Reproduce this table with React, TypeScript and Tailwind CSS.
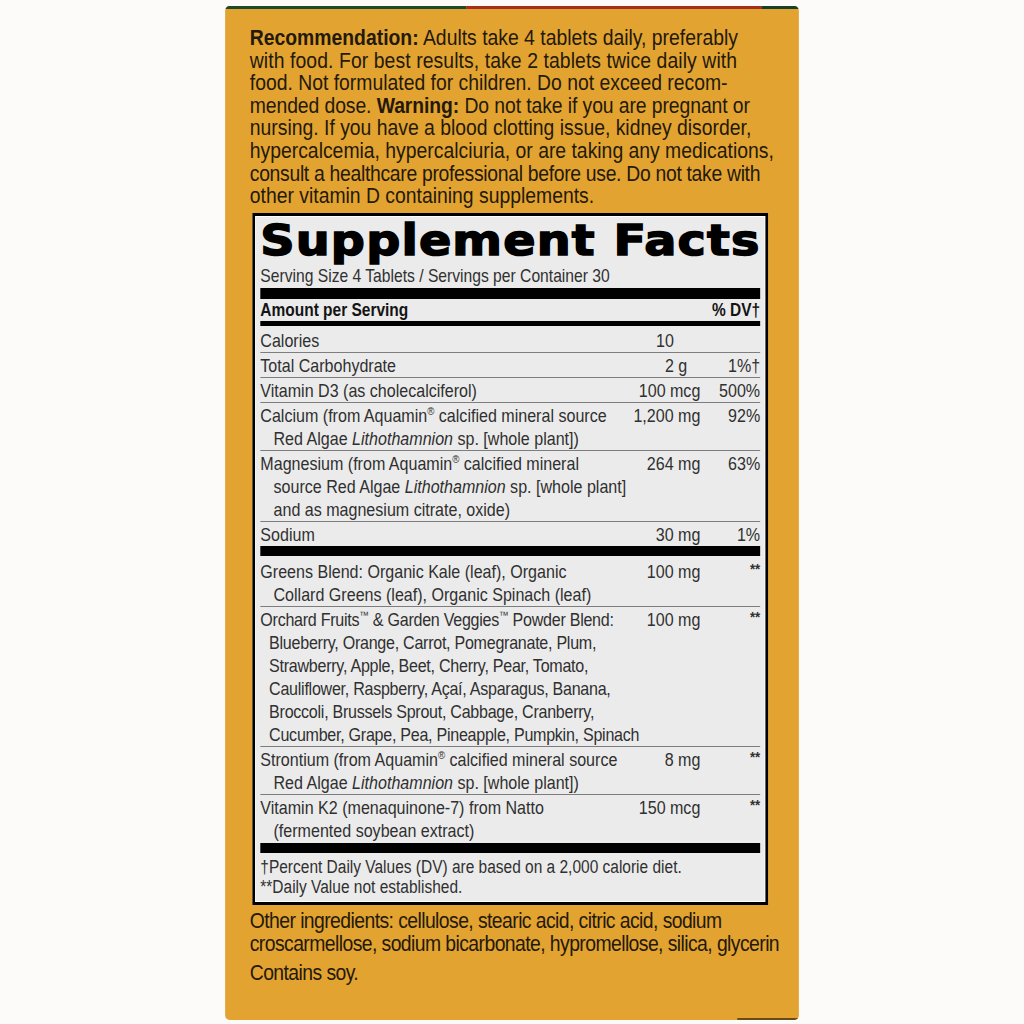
import type { ReactNode } from "react"

// The label is set in a condensed face. No narrow font is installed, so the
// whole panel is laid out in Liberation Sans and squeezed by scale-x 0.88.
// Horizontal sizes below are therefore in "unscaled" pixels (shown px / 0.88).

interface FactRow {
    lines: ReactNode[]
    num?: string
    unit?: string
    dv?: ReactNode
    indent?: "sm" | "md"
    tight?: boolean
}

const Reg = () => <sup className="text-[11px] top-[-7px]">®</sup>
const Tm = () => <sup className="text-[11px] top-[-7px]">™</sup>
const Stars = () => <span className="text-[15px] font-bold relative top-[-4px]">**</span>

const topRows: FactRow[] = [
    { lines: ["Calories"], num: "10" },
    { lines: ["Total Carbohydrate"], num: "2", unit: "g", dv: "1%†" },
    { lines: ["Vitamin D3 (as cholecalciferol)"], num: "100", unit: "mcg", dv: "500%" },
    {
        lines: [
            <>Calcium (from Aquamin<Reg /> calcified mineral source</>,
            <>Red Algae <i>Lithothamnion</i> sp. [whole plant])</>
        ],
        num: "1,200",
        unit: "mg",
        dv: "92%"
    },
    {
        lines: [
            <>Magnesium (from Aquamin<Reg /> calcified mineral</>,
            <>source Red Algae <i>Lithothamnion</i> sp. [whole plant]</>,
            "and as magnesium citrate, oxide)"
        ],
        num: "264",
        unit: "mg",
        dv: "63%"
    },
    { lines: ["Sodium"], num: "30", unit: "mg", dv: "1%" }
]

const blendRows: FactRow[] = [
    {
        lines: ["Greens Blend: Organic Kale (leaf), Organic", "Collard Greens (leaf), Organic Spinach (leaf)"],
        num: "100",
        unit: "mg",
        dv: <Stars />
    },
    {
        lines: [
            <>Orchard Fruits<Tm /> &amp; Garden Veggies<Tm /> Powder Blend:</>,
            "Blueberry, Orange, Carrot, Pomegranate, Plum,",
            "Strawberry, Apple, Beet, Cherry, Pear, Tomato,",
            "Cauliflower, Raspberry, Açaí, Asparagus, Banana,",
            "Broccoli, Brussels Sprout, Cabbage, Cranberry,",
            "Cucumber, Grape, Pea, Pineapple, Pumpkin, Spinach"
        ],
        num: "100",
        unit: "mg",
        dv: <Stars />,
        indent: "sm",
        tight: true
    },
    {
        lines: [
            <>Strontium (from Aquamin<Reg /> calcified mineral source</>,
            <>Red Algae <i>Lithothamnion</i> sp. [whole plant])</>
        ],
        num: "8",
        unit: "mg",
        dv: <Stars />
    },
    {
        lines: ["Vitamin K2 (menaquinone-7) from Natto", "(fermented soybean extract)"],
        num: "150",
        unit: "mcg",
        dv: <Stars />
    }
]

const Row = ({ row, last }: { row: FactRow; last?: boolean }) => (
    <div className={`flex pt-[1px] leading-[23px] ${last ? "" : "border-b border-[#7d7d7d]"}`}>
        <div className={`flex-1 min-w-0 ${row.tight ? "tracking-[-0.3px]" : ""}`}>
            {row.lines.map((line, i) => (
                <div
                    key={i}
                    className={`whitespace-nowrap ${i === 0 ? "" : row.indent === "sm" ? "pl-[10px]" : "pl-[15px]"}`}
                >
                    {line}
                </div>
            ))}
        </div>
        <div className="w-[98px] flex whitespace-nowrap">
            <span className="w-[68px] text-right">{row.num}</span>
            {row.unit && <span className="ml-[5px]">{row.unit}</span>}
        </div>
        <div className="w-[68px] text-right whitespace-nowrap">{row.dv}</div>
    </div>
)

export default function App() {
    return (
        <div className="min-h-screen bg-[#fcfbf9] flex justify-center pt-[6px] font-['Liberation_Sans',Arial,sans-serif]">
            <div className="w-[652px] h-[1014px] shrink-0 scale-x-[0.88] rounded-[5px] bg-[#e2a331] overflow-hidden flex flex-col relative">
                <div className="flex h-[3px] shrink-0">
                    <div className="w-[274px] bg-[#1d4a2c]" />
                    <div className="w-[336px] bg-[#a3301c]" />
                    <div className="flex-1 bg-[#173f2a]" />
                </div>

                <div className="pl-[28px] pt-[18px] text-[22px] leading-[22.6px] text-[#24190a] whitespace-nowrap">
                    <div><b>Recommendation:</b> Adults take 4 tablets daily, preferably</div>
                    <div className="tracking-[0.1px]">with food. For best results, take 2 tablets twice daily with</div>
                    <div>food. Not formulated for children. Do not exceed recom-</div>
                    <div className="tracking-[-0.1px]">mended dose. <b>Warning:</b> Do not take if you are pregnant or</div>
                    <div>nursing. If you have a blood clotting issue, kidney disorder,</div>
                    <div>hypercalcemia, hypercalciuria, or are taking any medications,</div>
                    <div className="tracking-[-0.35px]">consult a healthcare professional before use. Do not take with</div>
                    <div>other vitamin D containing supplements.</div>
                </div>

                <div className="mt-[5px] ml-[31px] w-[586px] border-[3px] border-black bg-[#ebebeb] shadow-[inset_0_0_0_1px_#ffffff] px-[6px] text-[18.25px] text-[#303030]">
                    <div className="pt-[2px] h-[49px] whitespace-nowrap">
                        <span className="inline-block origin-left scale-x-[1.29] font-['DejaVu_Sans',sans-serif] font-bold text-[42px] leading-[46px] tracking-[1px] text-black [-webkit-text-stroke:1.5px_black]">
                            Supplement Facts
                        </span>
                    </div>
                    <div className="text-[17.8px] leading-[22px] whitespace-nowrap">
                        Serving Size 4 Tablets / Servings per Container 30
                    </div>
                    <div className="h-[11px] bg-black mt-[1px]" />
                    <div className="flex justify-between font-bold text-[17.6px] text-[#141414] leading-[22px]">
                        <span>Amount per Serving</span>
                        <span>% DV†</span>
                    </div>
                    <div className="h-[5px] bg-black" />
                    <div className="pt-[2px]">
                        {topRows.map((r, i) => (
                            <Row key={i} row={r} last={i === topRows.length - 1} />
                        ))}
                    </div>
                    <div className="h-[10px] bg-black" />
                    <div className="pt-[3px]">
                        {blendRows.map((r, i) => (
                            <Row key={i} row={r} last={i === blendRows.length - 1} />
                        ))}
                    </div>
                    <div className="h-[10px] bg-black mt-[1px]" />
                    <div className="pt-[4px] pb-[5px] text-[17.6px] leading-[20px] whitespace-nowrap">
                        <div>†Percent Daily Values (DV) are based on a 2,000 calorie diet.</div>
                        <div>**Daily Value not established.</div>
                    </div>
                </div>

                <div className="pl-[28px] pt-[4px] text-[22px] leading-[23px] tracking-[-0.65px] text-[#24190a] whitespace-nowrap">
                    <div>Other ingredients: cellulose, stearic acid, citric acid, sodium</div>
                    <div>croscarmellose, sodium bicarbonate, hypromellose, silica, glycerin</div>
                    <div className="mt-[6px]">Contains soy.</div>
                </div>

                <div className="absolute bottom-0 right-0 w-[70px] h-[2px] bg-[#6b4a14]" />
            </div>
        </div>
    )
}
